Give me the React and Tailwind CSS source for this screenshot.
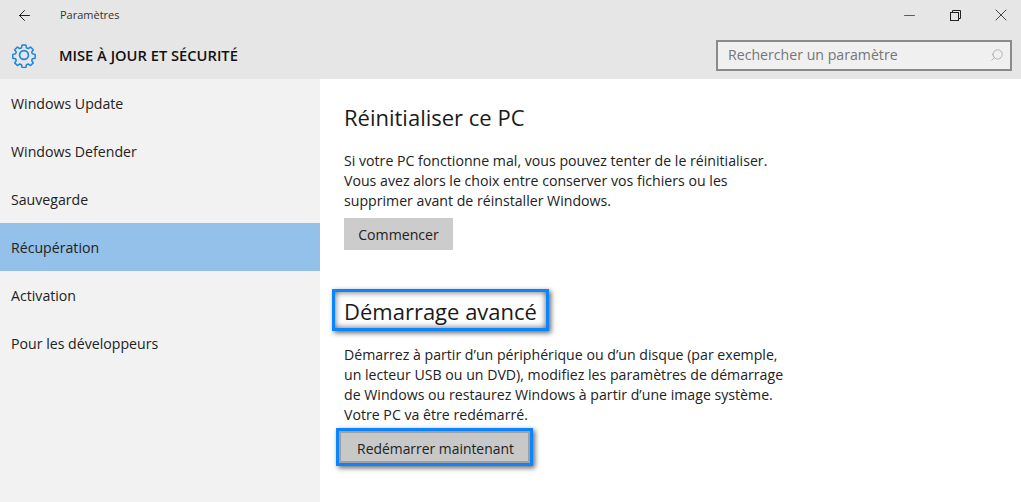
import { ArrowLeft, Minus, X, Search } from "lucide-react";

const navItems = [
  "Windows Update",
  "Windows Defender",
  "Sauvegarde",
  "Récupération",
  "Activation",
  "Pour les développeurs",
];

function Gear() {
  return (
    <svg width="26" height="26" viewBox="0 0 26 26" fill="none" stroke="#1a86e0" strokeWidth="1.7" strokeLinejoin="round">
      <circle cx="13" cy="13" r="4.4" />
      <path d="M10.8 1.6h4.4l.6 3.2 2 .9 2.7-1.8 3.1 3.1-1.8 2.7.8 2 3.2.6v4.4l-3.2.6-.8 2 1.8 2.7-3.1 3.1-2.7-1.8-2 .8-.6 3.2h-4.4l-.6-3.2-2-.8-2.7 1.8-3.1-3.1 1.8-2.7-.8-2-3.2-.6v-4.4l3.2-.6.8-2-1.8-2.7 3.1-3.1 2.7 1.8 2-.9z" transform="translate(1.6 1.6) scale(.875)" />
    </svg>
  );
}

function RestoreIcon() {
  return (
    <svg width="11" height="11" viewBox="0 0 11 11" fill="none" stroke="#222" strokeWidth="1">
      <rect x="0.5" y="2.5" width="8" height="8" />
      <path d="M2.5 2.5v-2h8v8h-2" />
    </svg>
  );
}

export default function App() {
  return (
    <div className="h-[502px] w-[1021px] overflow-hidden bg-white text-[#1a1a1a] font-['Open_Sans','Noto_Sans',sans-serif]">
      <header className="h-[79px] bg-[#e6e6e6]">
        <div className="flex h-[30px] items-center">
          <div className="flex w-[60px] justify-center pr-[12px]">
            <ArrowLeft size={17} strokeWidth={1.3} color="#111" />
          </div>
          <span className="text-[11px] text-[#333]">Paramètres</span>
          <div className="ml-auto flex items-center gap-[26px] pr-[10px]">
            <div className="flex w-[20px] justify-center">
              <Minus size={17} strokeWidth={1} color="#222" />
            </div>
            <div className="flex w-[20px] justify-center">
              <RestoreIcon />
            </div>
            <div className="flex w-[20px] justify-center">
              <X size={20} strokeWidth={1} color="#222" />
            </div>
          </div>
        </div>
        <div className="flex h-[50px] items-center">
          <div className="flex w-[48px] justify-center">
            <Gear />
          </div>
          <h1 className="ml-[11px] text-[14.7px] font-semibold text-[#111]">MISE À JOUR ET SÉCURITÉ</h1>
          <div className="ml-auto mr-[9px] flex h-[31px] w-[296px] items-center justify-between border-2 border-[#8a8a8a] bg-[#f0f0f0] pl-[10px] pr-[6px]">
            <span className="text-[14.15px] text-[#767676]">Rechercher un paramètre</span>
            <Search size={14} strokeWidth={1} color="#888" className="-scale-x-100" />
          </div>
        </div>
      </header>

      <div className="flex h-[423px]">
        <nav className="w-[320px] bg-[#f2f2f2]">
          {navItems.map((item) => (
            <div
              key={item}
              className={`flex h-[48px] items-center pl-[11px] pt-[2px] text-[14.15px] text-[#222] ${
                item === "Récupération" ? "bg-[#93c1e9]" : ""
              }`}
            >
              {item}
            </div>
          ))}
        </nav>

        <main className="flex-1 pl-[24px] pt-[21px] text-[14.15px] leading-[20px] text-[#222]">
          <h2 className="text-[22px] leading-[34px] text-[#1a1a1a]">Réinitialiser ce PC</h2>
          <p className="mt-[17px] w-[470px]">
            Si votre PC fonctionne mal, vous pouvez tenter de le réinitialiser.
            <br />
            Vous avez alors le choix entre conserver vos fichiers ou les
            <br />
            supprimer avant de réinstaller Windows.
          </p>
          <button className="mt-[7px] block h-[32px] w-[109px] bg-[#cccccc] pt-[2px] text-[#222]">Commencer</button>

          <div className="-ml-[12px] mt-[39px] flex h-[42px] w-[217px] items-center border-[3px] border-[#0a84ff] pl-[9px] pt-[2px] shadow-[2px_2px_5px_rgba(0,0,0,0.6),inset_0_0_6px_rgba(0,0,0,0.65)]">
            <h2 className="text-[22px] leading-[34px] whitespace-nowrap text-[#1a1a1a]">Démarrage avancé</h2>
          </div>
          <p className="mt-[14px] w-[480px]">
            Démarrez à partir d’un périphérique ou d’un disque (par exemple,
            <br />
            un lecteur USB ou un DVD), modifiez les paramètres de démarrage
            <br />
            de Windows ou restaurez Windows à partir d’une image système.
            <br />
            Votre PC va être redémarré.
          </p>
          <div className="-ml-[8px] mt-[3px] h-[38px] w-[197px] border-[3px] border-[#0a84ff] shadow-[2px_2px_5px_rgba(0,0,0,0.6)]">
            <button className="block h-full w-full border-2 border-[#a0a0a0] bg-[#c8c8c8] pl-[2px] pt-[3px] text-[13.9px] text-[#222]">
              Redémarrer maintenant
            </button>
          </div>
        </main>
      </div>
    </div>
  );
}
